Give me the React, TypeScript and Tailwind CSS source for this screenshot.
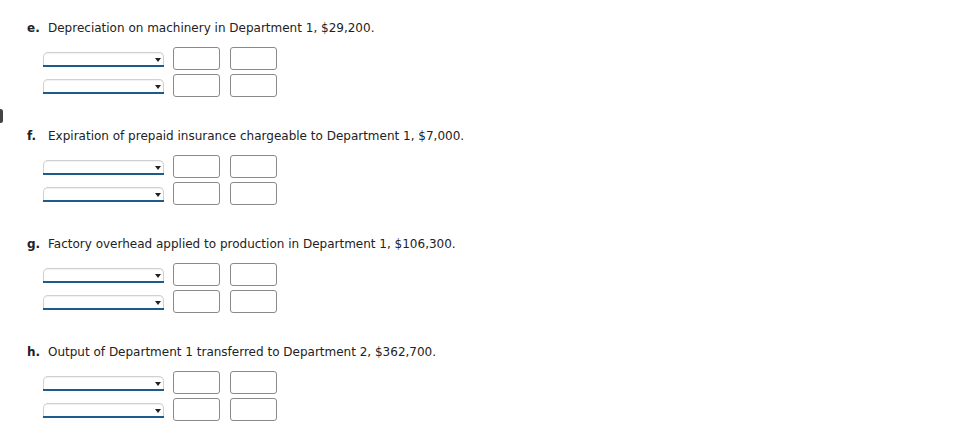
import React from 'react';

const items = [
  { letter: 'e.', text: 'Depreciation on machinery in Department 1, $29,200.' },
  { letter: 'f.', text: 'Expiration of prepaid insurance chargeable to Department 1, $7,000.' },
  { letter: 'g.', text: 'Factory overhead applied to production in Department 1, $106,300.' },
  { letter: 'h.', text: 'Output of Department 1 transferred to Department 2, $362,700.' },
];

const SelectBox: React.FC = () => (
  <div className="relative w-[121px] h-[14px] rounded-t-[5px] border border-[#d0d0d0] border-b-0 bg-white shadow-[inset_0_1px_1px_rgba(0,0,0,0.06)]">
    <div className="absolute left-[-1px] right-[-1px] bottom-[-1px] h-[2px] bg-[#1d5b8c]" />
    <span className="absolute right-[2px] top-[5px] w-0 h-0 border-l-[3.5px] border-r-[3.5px] border-t-[4px] border-l-transparent border-r-transparent border-t-[#222]" />
  </div>
);

const Cell: React.FC = () => (
  <div className="w-[47px] h-[23px] rounded-[3px] border border-[#8a8a8a] bg-white" />
);

const EntryRow: React.FC = () => (
  <div className="flex items-center">
    <SelectBox />
    <div className="ml-[9px]">
      <Cell />
    </div>
    <div className="ml-[10px]">
      <Cell />
    </div>
  </div>
);

export default function App() {
  return (
    <div className="relative w-[968px] h-[425px] bg-white overflow-hidden font-['DejaVu_Sans',Verdana,sans-serif] text-[#222]">
      <div className="absolute left-[-2px] top-[109px] w-[5px] h-[14px] rounded-full bg-[#444]" />
      <div className="flex flex-col pt-[20px]">
        {items.map((it) => (
          <section key={it.letter} className="h-[108px]">
            <p className="pl-[27px] text-[12px] leading-[16px]">
              <span className="font-bold inline-block w-[21px]">{it.letter}</span>
              {it.text}
            </p>
            <div className="pl-[43px] pt-[11px] flex flex-col gap-[4px]">
              <EntryRow />
              <EntryRow />
            </div>
          </section>
        ))}
      </div>
    </div>
  );
}
